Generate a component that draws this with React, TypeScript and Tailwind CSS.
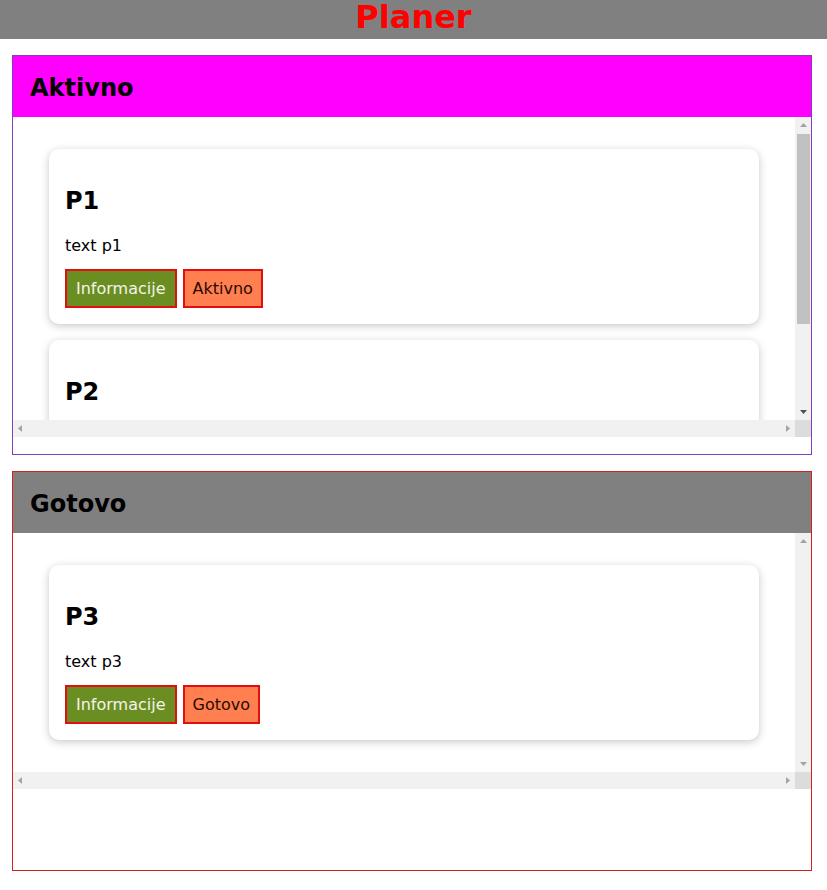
import React from "react";

type Task = { id: string; title: string; text: string };

const lists = [
  {
    name: "Aktivno",
    head: "bg-[#ff00ff]",
    border: "border-[#7f3fbf]",
    overflow: true,
    tasks: [
      { id: "p1", title: "P1", text: "text p1" },
      { id: "p2", title: "P2", text: "text p2" },
    ] as Task[],
  },
  {
    name: "Gotovo",
    head: "bg-[#808080]",
    border: "border-[#d62020]",
    overflow: false,
    tasks: [{ id: "p3", title: "P3", text: "text p3" }] as Task[],
  },
];

function Arrow({ dir, active }: { dir: "up" | "down" | "left" | "right"; active: boolean }) {
  const pts = {
    up: "0,4 3.5,0 7,4",
    down: "0,0 7,0 3.5,4",
    left: "4,0 4,7 0,3.5",
    right: "0,0 0,7 4,3.5",
  }[dir];
  const vertical = dir === "up" || dir === "down";
  return (
    <svg width={vertical ? 7 : 4} height={vertical ? 4 : 7} viewBox={vertical ? "0 0 7 4" : "0 0 4 7"}>
      <polygon points={pts} fill={active ? "#505050" : "#a3a3a3"} />
    </svg>
  );
}

function TaskCard({ task, status }: { task: Task; status: string }) {
  return (
    <div className="shrink-0 rounded-[10px] bg-white p-4 shadow-[0_2px_8px_rgba(0,0,0,0.22)]">
      <h2 className="mt-[22px] mb-5 text-[24px] font-bold leading-[29px] text-black">{task.title}</h2>
      <p className="mb-[13px] text-[16px] leading-[20px] text-black">{task.text}</p>
      <div className="flex gap-[6px]">
        <button className="border-2 border-[#e01010] bg-[#6b8e23] px-[9px] py-2 text-[16px] leading-[19px] text-[#f4f4e8]">
          Informacije
        </button>
        <button className="border-2 border-[#e01010] bg-[#ff7f50] px-2 py-2 text-[16px] leading-[19px] text-[#2a0a00]">
          {status}
        </button>
      </div>
    </div>
  );
}

export default function App() {
  return (
    <div className="min-h-screen bg-white font-['DejaVu_Sans',Verdana,sans-serif]">
      <header className="flex h-[39px] justify-center bg-[#808080]">
        <h1 className="text-[32px] font-bold leading-[35px] text-[#ff0000]">Planer</h1>
      </header>

      <div className="flex flex-col gap-4 pt-4 pl-[12px]">
        {lists.map((list) => (
          <section key={list.name} className={`flex h-[400px] w-[800px] flex-col border ${list.border}`}>
            <div className={`flex h-[61px] shrink-0 items-center pl-[17px] pt-[4px] ${list.head}`}>
              <h2 className="text-[24px] font-bold leading-[29px] text-black">{list.name}</h2>
            </div>

            {/* scroll area, scrollbars drawn by hand */}
            <div className="flex flex-col">
              <div className="flex">
                <div className="max-h-[303px] flex-1 overflow-hidden">
                  <div className="flex flex-col gap-4 px-9 py-8">
                    {list.tasks.map((t) => (
                      <TaskCard key={t.id} task={t} status={list.name} />
                    ))}
                  </div>
                </div>
                <div className="flex w-[16px] flex-col items-center bg-[#f1f1f1]">
                  <div className="flex h-[16px] items-center justify-center">
                    <Arrow dir="up" active={false} />
                  </div>
                  <div className="flex flex-1 flex-col pl-[2px] pr-[1px]">
                    {list.overflow && <div className="mt-[1px] h-[190px] w-[13px] bg-[#c1c1c1]" />}
                  </div>
                  <div className="flex h-[16px] items-center justify-center">
                    <Arrow dir="down" active={list.overflow} />
                  </div>
                </div>
              </div>
              <div className="flex h-[17px] bg-[#f1f1f1]">
                <div className="flex flex-1 items-center justify-between px-[5px]">
                  <Arrow dir="left" active={false} />
                  <Arrow dir="right" active={false} />
                </div>
                <div className="w-[16px] bg-[#dcdcdc]" />
              </div>
            </div>
          </section>
        ))}
      </div>
    </div>
  );
}
